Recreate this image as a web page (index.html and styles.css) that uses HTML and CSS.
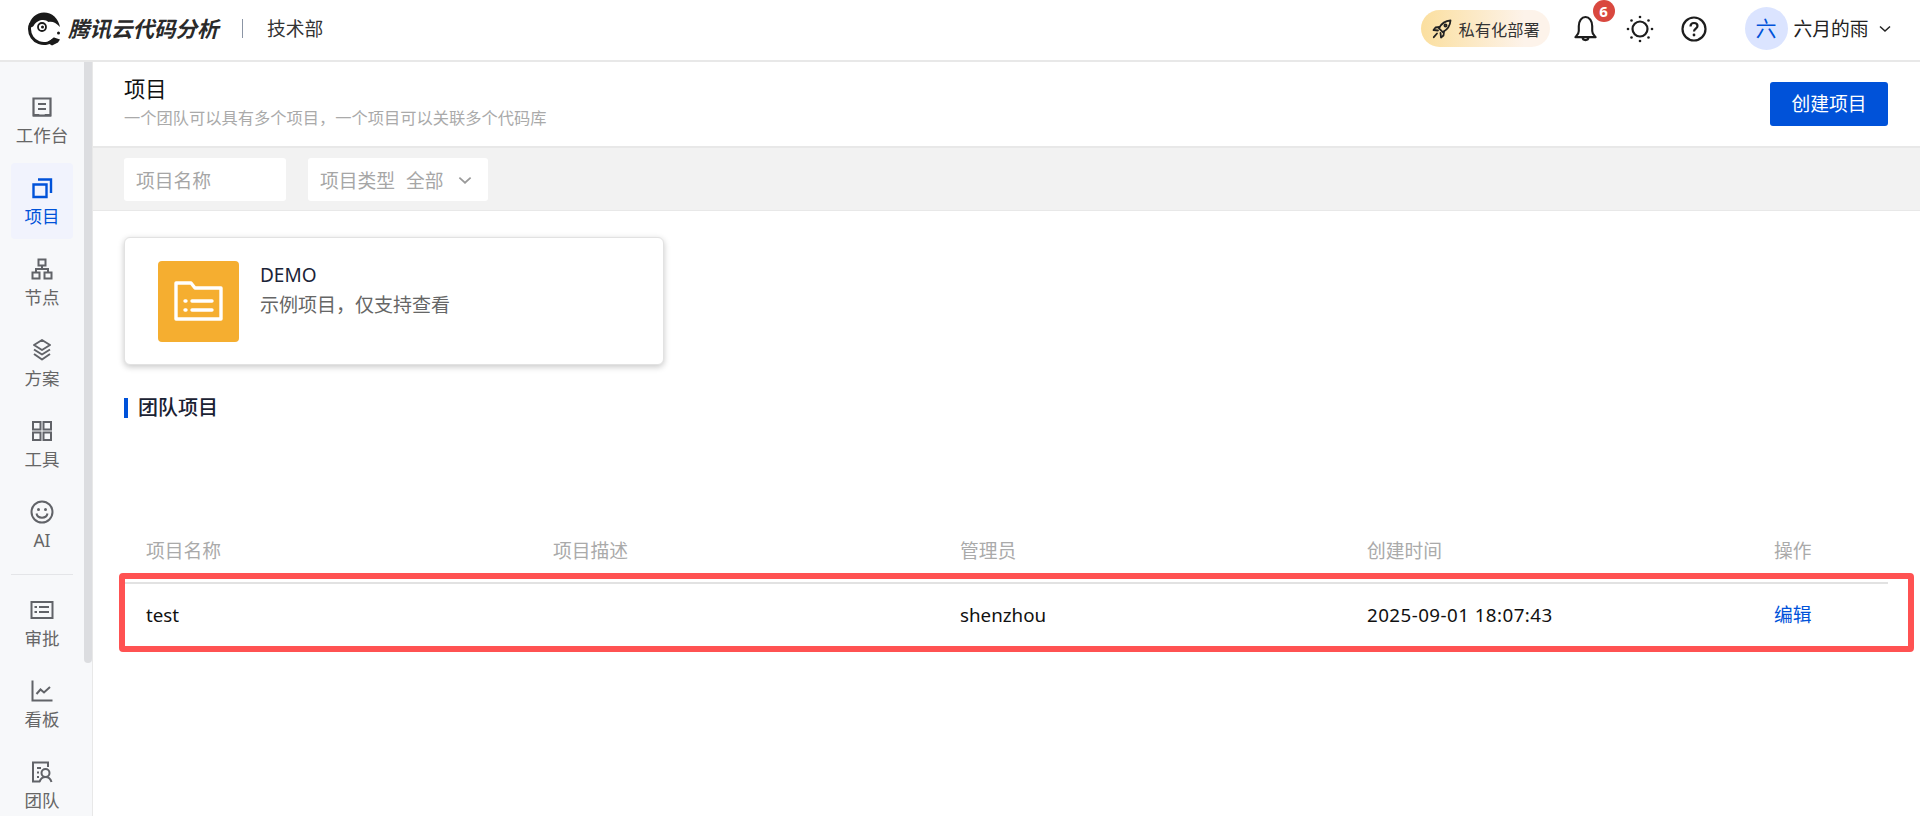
FILE: index.html
```html
<!DOCTYPE html>
<html lang="zh-CN">
<head>
<meta charset="utf-8">
<title>项目 - 腾讯云代码分析</title>
<link rel="stylesheet" href="styles.css">
</head>
<body>
<header class="topbar">
  <div class="brand">
    <svg class="logo" viewBox="0 0 34 34" fill="none">
      <path d="M28 26.500A14.500 14.500 0 0 1 2.500 17C2.500 15 3 13 3.800 11.500" stroke="#1a1a1a" stroke-width="3"/>
      <path d="M2 14C3 6 9.500 0.500 17 0.500C25 0.500 31.500 6.500 33 15C29 10.500 25 9 21.500 10C18 6.500 10 7.500 6.500 14C5.500 15.500 3.500 15.500 2 14Z" fill="#1a1a1a"/>
      <circle cx="15" cy="15" r="4" stroke="#1a1a1a" stroke-width="1.800"/>
      <circle cx="15.500" cy="15" r="1.500" fill="#1a1a1a"/>
      <path d="M20 30.500L27 25.500L33 27.500L31 30.500L25 33.500Z" fill="#1a1a1a"/>
      <circle cx="31.500" cy="21" r="1.500" fill="#1a1a1a"/>
    </svg>
    <span class="brand-name">腾讯云代码分析</span>
    <span class="brand-sep"></span>
    <span class="brand-org">技术部</span>
  </div>
  <div class="top-actions">
    <div class="deploy-pill">
      <svg class="rocket" viewBox="0 0 20 20" fill="none" stroke="#222" stroke-width="1.800" stroke-linejoin="round" stroke-linecap="round">
        <path d="M18.500 1.500C13.500 1.800 9.500 4.500 6.800 9.200L10.800 13.200C15.500 10.500 18.200 6.500 18.500 1.500Z"/>
        <path d="M7.500 8L3.500 8.500L1.500 11L6 11.500"/>
        <path d="M12 12.500L11.500 16.500L9 18.500L8.500 14"/>
        <path d="M5 14.500L1.800 18.200"/>
        <circle cx="13.500" cy="6.500" r="1.100"/>
      </svg>
      <span>私有化部署</span>
    </div>
    <div class="bell-wrap">
      <svg class="bell" viewBox="0 0 24 27" fill="none" stroke="#1d1d1d" stroke-width="2.200" stroke-linejoin="round">
        <path d="M5 11C5 5.500 8 1.500 12 1.500C16 1.500 19 5.500 19 11V16C19 19 21 20.500 22.500 22.500H1.500C3 20.500 5 19 5 16Z"/>
        <path d="M9 23C9 26.500 15 26.500 15 23"/>
      </svg>
      <span class="badge">6</span>
    </div>
    <svg class="sun" viewBox="0 0 28 28" fill="none" stroke="#1d1d1d" stroke-width="2.200">
      <circle cx="14" cy="14" r="7.500"/>
      <g fill="#1d1d1d" stroke="none">
        <circle cx="14" cy="2" r="1.300"/><circle cx="14" cy="26" r="1.300"/>
        <circle cx="2" cy="14" r="1.300"/><circle cx="26" cy="14" r="1.300"/>
        <circle cx="5.500" cy="5.500" r="1.300"/><circle cx="22.500" cy="5.500" r="1.300"/>
        <circle cx="5.500" cy="22.500" r="1.300"/><circle cx="22.500" cy="22.500" r="1.300"/>
      </g>
    </svg>
    <svg class="help" viewBox="0 0 26 26" fill="none" stroke="#1d1d1d" stroke-width="2.200">
      <circle cx="13" cy="13" r="11.500"/>
      <path d="M9.500 10.500C9.500 8.300 11 7 13 7C15 7 16.500 8.300 16.500 10C16.500 12.500 13 12.800 13 15.500" stroke-width="2.200"/>
      <circle cx="13" cy="19" r="1.400" fill="#1d1d1d" stroke="none"/>
    </svg>
    <div class="user">
      <span class="avatar">六</span>
      <span class="user-name">六月的雨</span>
      <svg class="chev" viewBox="0 0 12 8" fill="none" stroke="#222" stroke-width="1.500"><path d="M1 1.500L6 6L11 1.500"/></svg>
    </div>
  </div>
</header>
<div class="body-row">
  <aside class="sidebar">
    <nav class="nav">
      <a class="nav-item">
        <svg class="nav-icon" viewBox="0 0 24 24" fill="none" stroke="currentColor" stroke-width="2.200"><path d="M3.500 3.500H20.500V20.500H3.500Z"/><path d="M8 9H16M8 14H16" stroke-width="2"/><path d="M3 19H9L10 21H14L15 19H21V21.500H3Z" fill="currentColor" stroke="none"/></svg>
        <span>工作台</span>
      </a>
      <a class="nav-item active">
        <svg class="nav-icon" viewBox="0 0 24 24" fill="none" stroke="currentColor" stroke-width="2.400"><path d="M3.500 8.500H16.500V21H3.500Z"/><path d="M8 3.500H21V17"/></svg>
        <span>项目</span>
      </a>
      <a class="nav-item">
        <svg class="nav-icon" viewBox="0 0 24 24" fill="none" stroke="currentColor" stroke-width="2"><path d="M8.500 2.500H15.500V8.500H8.500Z"/><path d="M2.500 15.500H9.500V21.500H2.500Z"/><path d="M14.500 15.500H21.500V21.500H14.500Z"/><path d="M12 8.500V12M6 15.500V12H18V15.500"/></svg>
        <span>节点</span>
      </a>
      <a class="nav-item">
        <svg class="nav-icon" viewBox="0 0 24 24" fill="none" stroke="currentColor" stroke-width="2" stroke-linejoin="round"><path d="M12 2L20 7L12 12L4 7Z"/><path d="M4 11.500L12 16.500L20 11.500"/><path d="M4 16L12 21.500L20 16"/></svg>
        <span>方案</span>
      </a>
      <a class="nav-item">
        <svg class="nav-icon" viewBox="0 0 24 24" fill="none" stroke="currentColor" stroke-width="2"><path d="M3 3H10.500V10.500H3Z"/><path d="M13.500 3H21V10.500H13.500Z"/><path d="M3 13.500H10.500V21H3Z"/><path d="M13.500 13.500H21V21H13.500Z"/></svg>
        <span>工具</span>
      </a>
      <a class="nav-item">
        <svg class="nav-icon" viewBox="0 0 24 24" fill="none" stroke="currentColor" stroke-width="2"><circle cx="12" cy="12" r="10.500"/><circle cx="8.500" cy="9.500" r="1.500" fill="currentColor" stroke="none"/><circle cx="15.500" cy="9.500" r="1.500" fill="currentColor" stroke="none"/><path d="M6.500 13.500C7.500 19 16.500 19 17.500 13.500"/></svg>
        <span>AI</span>
      </a>
      <div class="nav-divider"></div>
      <a class="nav-item">
        <svg class="nav-icon" viewBox="0 0 24 24" fill="none" stroke="currentColor" stroke-width="2"><path d="M1.500 4H22.500V20H1.500Z"/><path d="M9 9H19M9 14H19"/><path d="M4.500 9H7M4.500 14H7"/></svg>
        <span>审批</span>
      </a>
      <a class="nav-item">
        <svg class="nav-icon" viewBox="0 0 24 24" fill="none" stroke="currentColor" stroke-width="2"><path d="M2.500 1.500V21.500H22.500"/><path d="M6.500 15L10.500 10.500L14 13.500L20 8"/></svg>
        <span>看板</span>
      </a>
      <a class="nav-item">
        <svg class="nav-icon" viewBox="0 0 24 24" fill="none" stroke="currentColor" stroke-width="2"><path d="M10 21.500H3V2.500H18V7"/><path d="M7 8H11M7 12.500H9M7 17H9"/><circle cx="15.500" cy="13" r="4"/><path d="M9.500 22C10.500 18.500 13 17 15.500 17C18 17 20.500 18.500 21.500 22"/></svg>
        <span>团队</span>
      </a>
    </nav>
    <div class="scroll-track"><div class="scroll-thumb"></div></div>
  </aside>
  <main class="main">
    <section class="page-head">
      <div>
        <h1 class="page-title">项目</h1>
        <p class="page-sub">一个团队可以具有多个项目，一个项目可以关联多个代码库</p>
      </div>
      <button class="primary-btn">创建项目</button>
    </section>
    <section class="filters">
      <div class="filter filter-name">项目名称</div>
      <div class="filter filter-type">
        <span>项目类型</span>
        <span class="filter-value">全部</span>
        <svg class="filter-chev" viewBox="0 0 12 8" fill="none" stroke="#999" stroke-width="1.500"><path d="M1 1.500L6 6L11 1.500"/></svg>
      </div>
    </section>
    <section class="content">
      <div class="demo-card">
        <div class="demo-tile">
          <svg viewBox="0 0 49 40" fill="none" stroke="#fff" stroke-width="3.400" stroke-linejoin="round"><path d="M2 2H17L21 7H47V38H2Z"/><path d="M18 20H38M18 29H38" stroke-linecap="round"/><path d="M11 20H12M11 29H12" stroke-linecap="round"/></svg>
        </div>
        <div class="demo-text">
          <div class="demo-name">DEMO</div>
          <div class="demo-desc">示例项目，仅支持查看</div>
        </div>
      </div>
      <h2 class="section-title">团队项目</h2>
      <div class="table">
        <div class="table-row table-head">
          <div class="cell">项目名称</div>
          <div class="cell">项目描述</div>
          <div class="cell">管理员</div>
          <div class="cell">创建时间</div>
          <div class="cell">操作</div>
        </div>
        <div class="table-row table-body">
          <div class="cell">test</div>
          <div class="cell"></div>
          <div class="cell">shenzhou</div>
          <div class="cell cell-date">2025-09-01 18:07:43</div>
          <div class="cell"><a class="link">编辑</a></div>
        </div>
        <div class="highlight"></div>
      </div>
    </section>
  </main>
</div>
</body>
</html>
```
FILE: styles.css
```css
* { box-sizing: border-box; }
html, body { margin: 0; height: 100%; }
body {
  font-family: "Noto Sans", "Noto Sans CJK SC", sans-serif;
  color: #1a1a1a;
  background: #fff;
  overflow: hidden;
}
.topbar {
  height: 62px;
  border-bottom: 2px solid #e8e8e8;
  display: flex;
  align-items: center;
  justify-content: space-between;
  padding: 0 0 3px 27px;
  background: #fff;
}
.brand { display: flex; align-items: center; }
.logo { width: 34px; height: 34px; }
.brand-name {
  margin-left: 7px;
  font-size: 21.500px;
  line-height: 30px;
  font-weight: 700;
  font-style: italic;
  color: #2a2a2a;
  white-space: nowrap;
}
.brand-sep { width: 1.500px; height: 19px; background: #8b95a5; margin: 0 24px 0 23px; }
.brand-org { font-size: 18.750px; line-height: 26px; color: #333; }
.top-actions { display: flex; align-items: center; height: 57px; }
.deploy-pill {
  width: 129px;
  height: 37px;
  border-radius: 19px;
  background: linear-gradient(90deg, #fbdf9f, #fdf3ea 80%);
  display: flex;
  align-items: center;
  padding-left: 11px;
  font-size: 16.250px;
  color: #333;
  white-space: nowrap;
}
.rocket { width: 20px; height: 20px; margin-right: 7px; flex: none; }
.bell-wrap { position: relative; margin-left: 24px; width: 23px; height: 27px; }
.bell { width: 23px; height: 27px; display: block; }
.badge {
  position: absolute;
  left: 19px;
  top: -15px;
  width: 22px;
  height: 22px;
  border-radius: 50%;
  background: #d9483f;
  color: #fff;
  font-size: 15px;
  font-weight: 700;
  line-height: 22px;
  text-align: center;
}
.sun { width: 28px; height: 28px; margin-left: 29px; }
.help { width: 26px; height: 26px; margin-left: 27px; }
.user { display: flex; align-items: center; margin-left: 38px; }
.avatar {
  width: 43px;
  height: 43px;
  border-radius: 50%;
  background: #dbe4ff;
  color: #0052d9;
  font-size: 21px;
  line-height: 43px;
  text-align: center;
}
.user-name { margin-left: 6px; font-size: 18.750px; line-height: 26px; color: #222; white-space: nowrap; }
.chev { width: 12px; height: 8px; margin: 0 29.500px 0 10px; }

.body-row { display: flex; height: calc(100vh - 62px); }
.sidebar {
  width: 93px;
  flex: none;
  display: flex;
  background: #f7f8fa;
  border-right: 1px solid #e8e8e8;
  overflow: hidden;
}
.nav { width: 84px; flex: none; padding: 20px 11px 0; }
.nav-item {
  display: flex;
  flex-direction: column;
  align-items: center;
  height: 76px;
  margin-bottom: 5px;
  padding-top: 13px;
  border-radius: 4px;
  color: #666;
  font-size: 17.500px;
  line-height: 24px;
  white-space: nowrap;
}
.nav-item span { margin-top: 4px; }
.nav-icon { width: 24px; height: 24px; color: #616368; flex: none; }
.nav-item.active { background: #f1f3fd; color: #0052d9; }
.nav-item.active .nav-icon { color: #0052d9; }
.nav-divider { height: 1px; background: #e4e5e8; margin: 11px 0 10px; }
.scroll-track { width: 8px; flex: none; }
.scroll-thumb { height: 601px; background: #dcdde0; border-radius: 0 0 4px 4px; }

.main { flex: 1; min-width: 0; }
.page-head {
  height: 84px;
  padding: 0 32px 0 31px;
  display: flex;
  justify-content: space-between;
  align-items: flex-start;
}
.page-title { margin: 12px 0 0; font-size: 21.250px; line-height: 30px; font-weight: 400; color: #111; }
.page-sub { margin: 3px 0 0; font-size: 16.250px; line-height: 22px; color: #aaa; white-space: nowrap; }
.primary-btn {
  margin-top: 20px;
  width: 118px;
  height: 44px;
  border: 0;
  border-radius: 3px;
  background: #0052d9;
  color: #fff;
  font: inherit;
  font-size: 18.750px;
  line-height: 44px;
  padding: 0;
}
.filters {
  height: 65px;
  background: #f2f2f2;
  border-top: 2px solid #e8e8e8;
  border-bottom: 1px solid #e8e8e8;
  padding: 10px 31px;
  display: flex;
  gap: 22px;
}
.filter {
  height: 43px;
  background: #fff;
  border-radius: 3px;
  padding: 2px 0 0 12px;
  font-size: 18.750px;
  line-height: 26px;
  color: #a6a6a6;
  white-space: nowrap;
  display: flex;
  align-items: center;
}
.filter-name { width: 162px; }
.filter-type { width: 180px; }
.filter-value { margin-left: 11px; }
.filter-chev { width: 14px; height: 9px; margin-left: 14px; }
.content { padding: 26px 32px 0 31px; }
.demo-card {
  width: 540px;
  height: 128px;
  border: 1px solid #e2e2e2;
  border-radius: 6px;
  box-shadow: 0 2px 6px rgba(0, 0, 0, 0.22);
  background: #fff;
  display: flex;
  align-items: center;
  padding-left: 33px;
}
.demo-tile {
  width: 81px;
  height: 81px;
  background: #f5ae30;
  border-radius: 4px;
  display: flex;
  align-items: center;
  justify-content: center;
}
.demo-tile svg { width: 49px; height: 40px; }
.demo-text { margin: 24px 0 0 21px; align-self: flex-start; }
.demo-name { font-size: 19px; line-height: 26px; color: #1b2438; }
.demo-desc { margin-top: 4px; font-size: 19px; line-height: 26px; color: #666; }
.section-title {
  margin: 33px 0 0;
  padding-left: 10px;
  border-left: 4px solid #0052d9;
  font-size: 20px;
  line-height: 20px;
  font-weight: 500;
  color: #1a2233;
}
.table { position: relative; margin-top: 109px; }
.table-row {
  display: grid;
  grid-template-columns: repeat(4, 407px) 1fr;
  font-size: 18.750px;
  line-height: 26px;
}
.cell { padding-left: 22px; white-space: nowrap; }
.cell-date { letter-spacing: 0.450px; }
.table-head { height: 57px; border-bottom: 2px solid #e2e2e2; padding-top: 11px; color: #aaa; }
.table-body { height: 65px; padding-top: 18px; color: #111; }
.link { color: #0052d9; }
.highlight {
  position: absolute;
  left: -5px;
  right: -26px;
  top: 46px;
  height: 79px;
  border: 6px solid #ff5252;
  border-radius: 4px;
}
```
